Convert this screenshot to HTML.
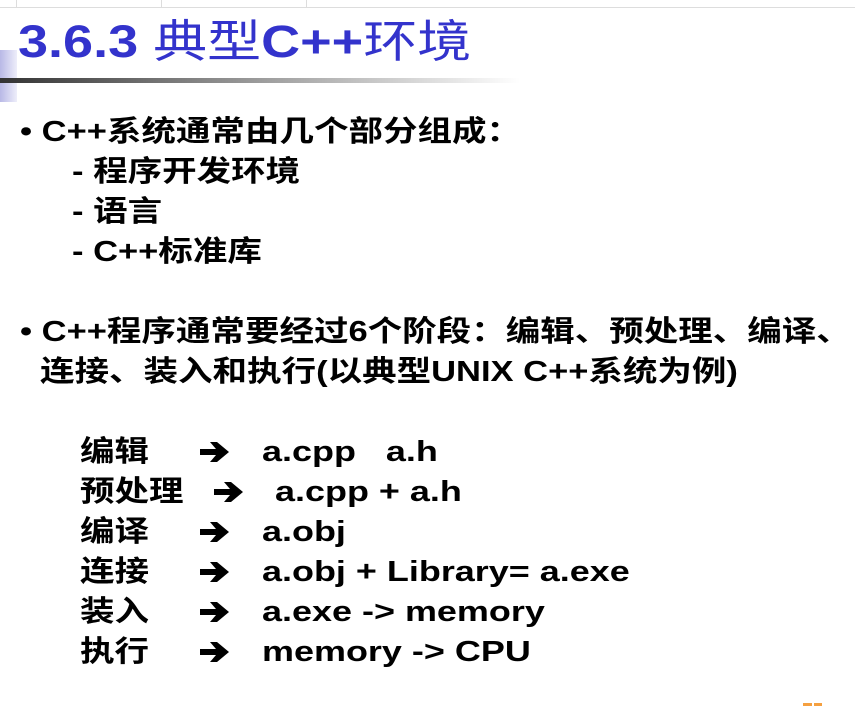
<!DOCTYPE html>
<html><head><meta charset="utf-8"><style>
body{margin:0;width:855px;height:706px;background:#fff;position:relative;overflow:hidden;font-family:"Liberation Sans","Noto Sans CJK SC",sans-serif;}
.t{position:absolute;white-space:nowrap;font-weight:bold;font-size:29px;color:#000;line-height:40px;transform:scaleX(1.19);transform-origin:0 0;}
</style></head><body>
<div style="position:absolute;left:0;top:0;width:855px;height:7px;border-bottom:1px solid #ddd;"></div>
<div style="position:absolute;left:16px;top:0;width:1px;height:7px;background:#ddd"></div>
<div style="position:absolute;left:161px;top:0;width:1px;height:7px;background:#ddd"></div>
<div style="position:absolute;left:306px;top:0;width:1px;height:7px;background:#ddd"></div>
<div style="position:absolute;left:0;top:50px;width:17px;height:52px;background:linear-gradient(90deg,#b8b8e6,#eeeefa)"></div>
<div style="position:absolute;left:0;top:78px;width:520px;height:5px;background:linear-gradient(90deg,#333,#888 40%,#fff)"></div>
<div style="position:absolute;left:18px;top:14px;font-size:45px;line-height:56px;color:#3333cc;white-space:nowrap;transform:scaleX(1.2);transform-origin:0 0"><b>3.6.3</b> 典型<b>C++</b>环境</div>
<div class="t" style="left:20px;top:112px">• C++系统通常由几个部分组成：</div>
<div class="t" style="left:72px;top:152px">- 程序开发环境</div>
<div class="t" style="left:72px;top:192px">- 语言</div>
<div class="t" style="left:72px;top:232px">- C++标准库</div>
<div class="t" style="left:20px;top:312px">• C++程序通常要经过6个阶段：编辑、预处理、编译、</div>
<div class="t" style="left:40px;top:352px">连接、装入和执行(以典型UNIX C++系统为例)</div>
<div class="t" style="left:80px;top:432px">编辑</div><div class="t" style="left:262px;top:432px;transform:scaleX(1.24)">a.cpp &nbsp;&nbsp;a.h</div>
<div class="t" style="left:80px;top:472px">预处理</div><div class="t" style="left:275px;top:472px;transform:scaleX(1.24)">a.cpp + a.h</div>
<div class="t" style="left:80px;top:512px">编译</div><div class="t" style="left:262px;top:512px;transform:scaleX(1.24)">a.obj</div>
<div class="t" style="left:80px;top:552px">连接</div><div class="t" style="left:262px;top:552px;transform:scaleX(1.24)">a.obj + Library= a.exe</div>
<div class="t" style="left:80px;top:592px">装入</div><div class="t" style="left:262px;top:592px;transform:scaleX(1.24)">a.exe -&gt; memory</div>
<div class="t" style="left:80px;top:632px">执行</div><div class="t" style="left:262px;top:632px;transform:scaleX(1.24)">memory -&gt; CPU</div>
<svg style="position:absolute;left:0;top:0" width="855" height="706">
<defs><path id="a" d="M0 8h16l-6-7h7l12 10l-12 10h-7l6-7h-16z"/></defs>
<use href="#a" x="200" y="441"/>
<use href="#a" x="214" y="481"/>
<use href="#a" x="200" y="521"/>
<use href="#a" x="200" y="561"/>
<use href="#a" x="200" y="601"/>
<use href="#a" x="200" y="641"/>
<rect x="803" y="703" width="9" height="3" fill="#f5a040"/>
<rect x="814" y="703" width="8" height="3" fill="#f5a040"/>
</svg>
</body></html>
